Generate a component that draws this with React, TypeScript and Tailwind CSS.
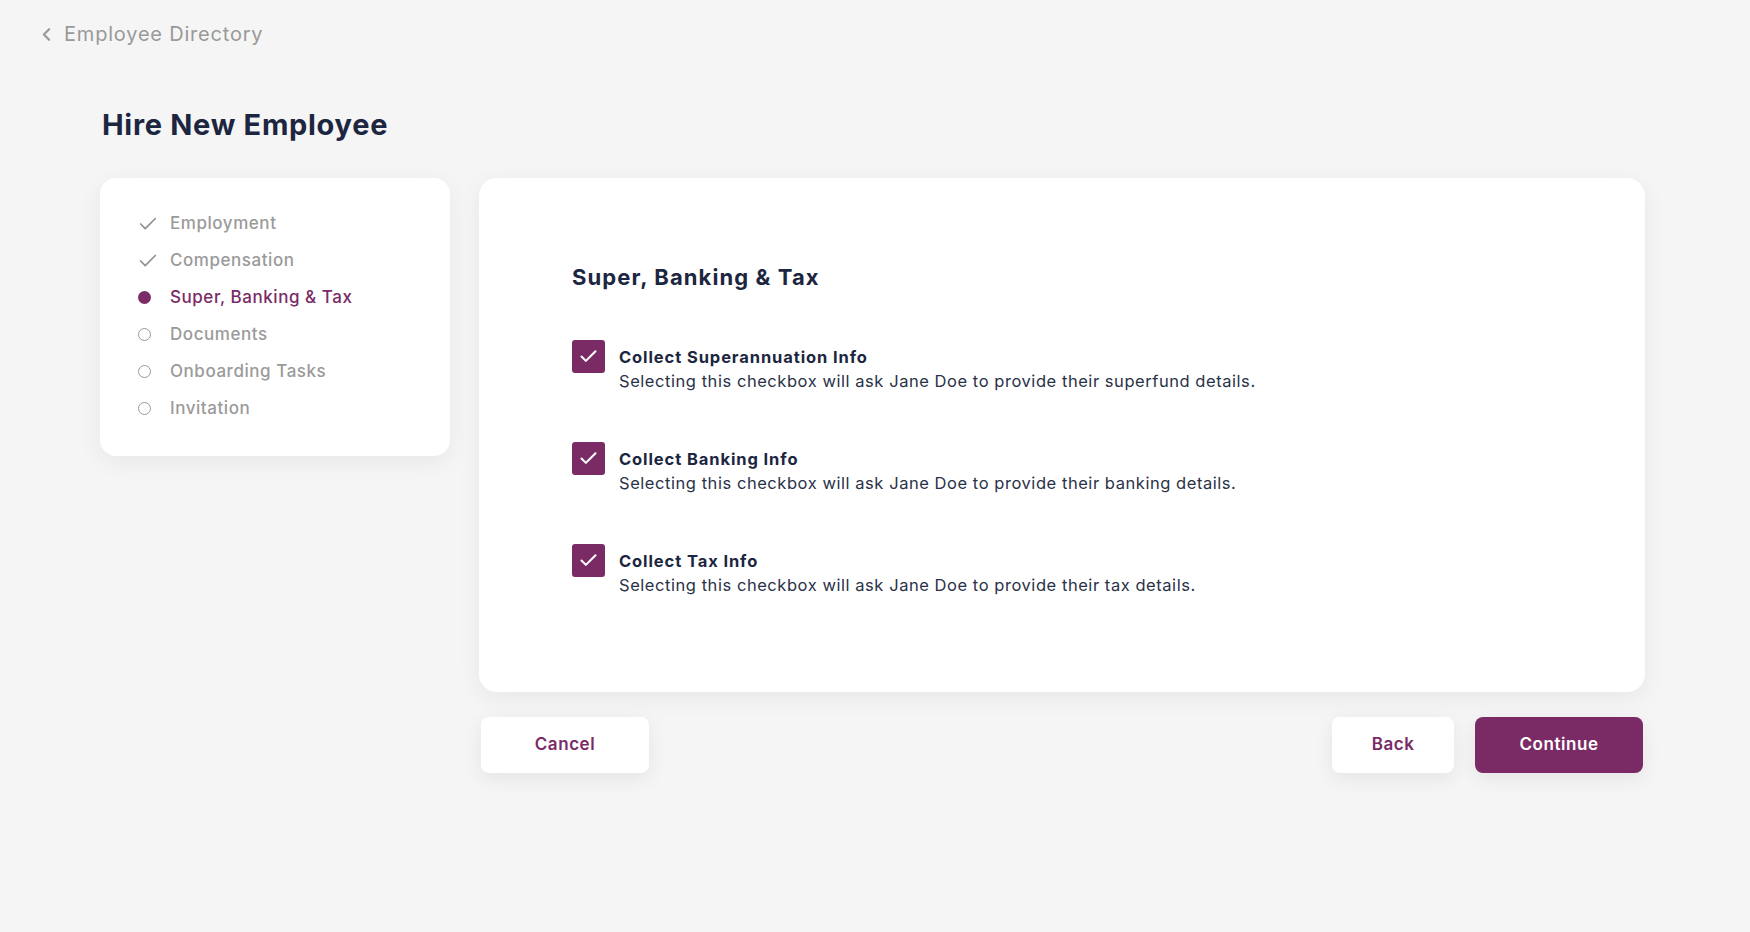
import { Check, ChevronLeft } from "lucide-react";

const steps = [
  { label: "Employment", state: "done" },
  { label: "Compensation", state: "done" },
  { label: "Super, Banking & Tax", state: "active" },
  { label: "Documents", state: "todo" },
  { label: "Onboarding Tasks", state: "todo" },
  { label: "Invitation", state: "todo" },
];

const options = [
  {
    title: "Collect Superannuation Info",
    text: "Selecting this checkbox will ask Jane Doe to provide their superfund details.",
  },
  {
    title: "Collect Banking Info",
    text: "Selecting this checkbox will ask Jane Doe to provide their banking details.",
  },
  {
    title: "Collect Tax Info",
    text: "Selecting this checkbox will ask Jane Doe to provide their tax details.",
  },
];

const StepIcon = ({ state }: { state: string }) => {
  if (state === "done") {
    return <Check className="-ml-[1px] h-[22px] w-[22px] text-[#8f8f8f]" strokeWidth={1.8} />;
  }
  if (state === "active") {
    return <span className="block h-[13px] w-[13px] rounded-full bg-[#7a2b66]" />;
  }
  return <span className="block h-[13px] w-[13px] rounded-full border-[1.5px] border-[#9a9a9a]" />;
};

const App = () => {
  return (
    <div className="min-h-screen bg-[#f5f5f5] font-['Inter',sans-serif]">
      {/* Back link */}
      <div className="flex items-center gap-[7px] pl-[36px] pt-[19px] text-[20px] tracking-[0.8px] text-[#999999]">
        <ChevronLeft className="h-[21px] w-[21px]" strokeWidth={2.6} />
        <span>Employee Directory</span>
      </div>

      <div className="pl-[100px] pr-[105px]">
        <h1 className="mt-[58px] pl-[2px] text-[29px] font-bold leading-[36px] tracking-[0.7px] text-[#1c2640]">
          Hire New Employee
        </h1>

        <div className="mt-[35px] flex items-start gap-[29px]">
          {/* Steps */}
          <aside className="w-[350px] shrink-0 rounded-2xl bg-white pt-[27px] pb-[29px] pl-[38px] shadow-[0_6px_24px_rgba(0,0,0,0.06)]">
            {steps.map((s) => (
              <div key={s.label} className="flex h-[37px] items-center">
                <span className="flex w-[32px] items-center">
                  <StepIcon state={s.state} />
                </span>
                <span
                  className={
                    s.state === "active"
                      ? "text-[17px] font-medium tracking-[0.55px] text-[#7a2b66]"
                      : "text-[17px] font-medium tracking-[0.55px] text-[#9a9a9a]"
                  }
                >
                  {s.label}
                </span>
              </div>
            ))}
          </aside>

          {/* Main */}
          <div className="flex-1">
            <section className="h-[514px] rounded-[18px] bg-white pl-[93px] pt-[84px] shadow-[0_6px_24px_rgba(0,0,0,0.06)]">
              <h2 className="text-[22px] font-bold leading-[30px] tracking-[1.1px] text-[#1c2640]">
                Super, Banking &amp; Tax
              </h2>
              <div className="mt-[48px] flex flex-col gap-[49px]">
                {options.map((o) => (
                  <div key={o.title} className="flex items-start gap-[14px]">
                    <span className="flex h-[33px] w-[33px] shrink-0 items-center justify-center rounded-[3px] bg-[#7a2b66]">
                      <Check className="h-[21px] w-[21px] text-white" strokeWidth={2.4} />
                    </span>
                    <div className="pt-[6px] text-[#1c2640]">
                      <div className="text-[16.5px] font-bold leading-[22px] tracking-[0.9px]">{o.title}</div>
                      <div className="mt-[1px] text-[16.5px] leading-[24px] tracking-[0.55px] text-[#2a3247]">
                        {o.text}
                      </div>
                    </div>
                  </div>
                ))}
              </div>
            </section>

            <div className="mt-[25px] flex items-center justify-between px-[2px]">
              <button className="h-[56px] w-[168px] rounded-lg bg-white text-[17px] font-semibold tracking-[0.55px] text-[#7a2b66] shadow-[0_6px_20px_rgba(0,0,0,0.07)]">
                Cancel
              </button>
              <div className="flex gap-[21px]">
                <button className="h-[56px] w-[122px] rounded-lg bg-white text-[17px] font-semibold tracking-[0.55px] text-[#7a2b66] shadow-[0_6px_20px_rgba(0,0,0,0.07)]">
                  Back
                </button>
                <button className="h-[56px] w-[168px] rounded-lg bg-[#7a2b66] text-[17px] font-semibold tracking-[0.55px] text-white shadow-[0_6px_20px_rgba(0,0,0,0.07)]">
                  Continue
                </button>
              </div>
            </div>
          </div>
        </div>
      </div>
    </div>
  );
};

export default App;
